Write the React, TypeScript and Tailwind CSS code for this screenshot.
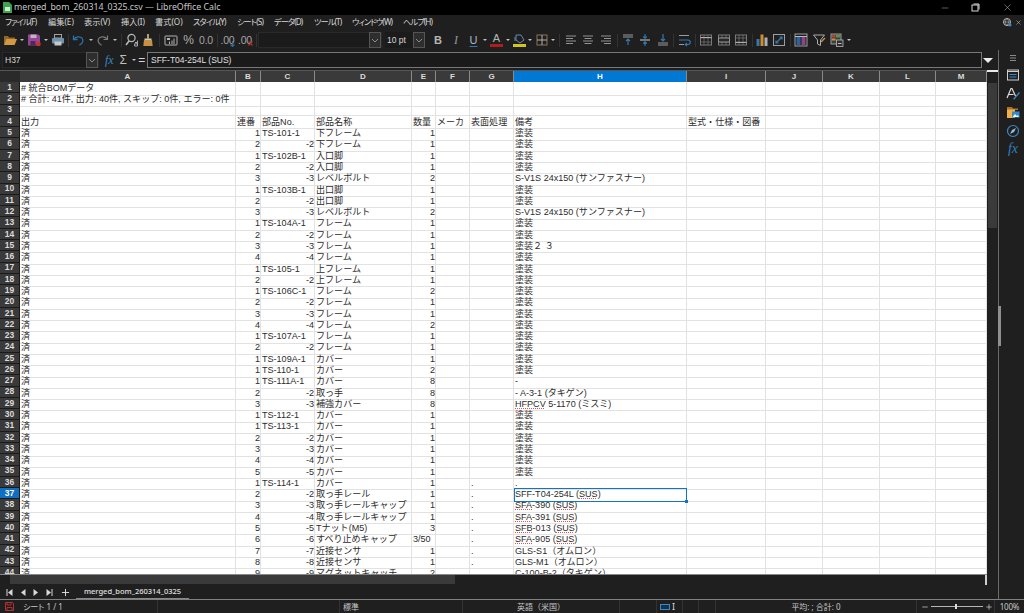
import React from "react";
import { Minus, Plus, X } from "lucide-react";

type R = [string, string, string, string, string, string, string, string, string];
const T = "塗装";
const rows: R[] = [
  ["# 統合BOMデータ", "", "", "", "", "", "", "", ""],
  ["# 合計: 41件, 出力: 40件, スキップ: 0件, エラー: 0件", "", "", "", "", "", "", "", ""],
  ["", "", "", "", "", "", "", "", ""],
  ["出力", "連番", "部品No.", "部品名称", "数量", "メーカ", "表面処理", "備考", "型式・仕様・図番"],
  ["済", "1", "TS-101-1", "下フレーム", "1", "", "", T, ""],
  ["済", "2", "-2", "下フレーム", "1", "", "", T, ""],
  ["済", "1", "TS-102B-1", "入口脚", "1", "", "", T, ""],
  ["済", "2", "-2", "入口脚", "1", "", "", T, ""],
  ["済", "3", "-3", "レベルボルト", "2", "", "", "S-V1S 24x150 (サンファスナー)", ""],
  ["済", "1", "TS-103B-1", "出口脚", "1", "", "", T, ""],
  ["済", "2", "-2", "出口脚", "1", "", "", T, ""],
  ["済", "3", "-3", "レベルボルト", "2", "", "", "S-V1S 24x150 (サンファスナー)", ""],
  ["済", "1", "TS-104A-1", "フレーム", "1", "", "", T, ""],
  ["済", "2", "-2", "フレーム", "1", "", "", T, ""],
  ["済", "3", "-3", "フレーム", "1", "", "", "塗装２ ３", ""],
  ["済", "4", "-4", "フレーム", "1", "", "", T, ""],
  ["済", "1", "TS-105-1", "上フレーム", "1", "", "", T, ""],
  ["済", "2", "-2", "上フレーム", "1", "", "", T, ""],
  ["済", "1", "TS-106C-1", "フレーム", "2", "", "", T, ""],
  ["済", "2", "-2", "フレーム", "1", "", "", T, ""],
  ["済", "3", "-3", "フレーム", "1", "", "", T, ""],
  ["済", "4", "-4", "フレーム", "2", "", "", T, ""],
  ["済", "1", "TS-107A-1", "フレーム", "1", "", "", T, ""],
  ["済", "2", "-2", "フレーム", "1", "", "", T, ""],
  ["済", "1", "TS-109A-1", "カバー", "1", "", "", T, ""],
  ["済", "1", "TS-110-1", "カバー", "2", "", "", T, ""],
  ["済", "1", "TS-111A-1", "カバー", "8", "", "", "-", ""],
  ["済", "2", "-2", "取っ手", "8", "", "", "- A-3-1 (タキゲン)", ""],
  ["済", "3", "-3", "補強カバー", "8", "", "", "HFPCV 5-1170 (ミスミ)", ""],
  ["済", "1", "TS-112-1", "カバー", "1", "", "", T, ""],
  ["済", "1", "TS-113-1", "カバー", "1", "", "", T, ""],
  ["済", "2", "-2", "カバー", "1", "", "", T, ""],
  ["済", "3", "-3", "カバー", "1", "", "", T, ""],
  ["済", "4", "-4", "カバー", "1", "", "", T, ""],
  ["済", "5", "-5", "カバー", "1", "", "", T, ""],
  ["済", "1", "TS-114-1", "カバー", "1", "", ".", ".", ""],
  ["済", "2", "-2", "取っ手レール", "1", "", ".", "SFF-T04-254L (SUS)", ""],
  ["済", "3", "-3", "取っ手レールキャップ", "1", "", ".", "SFA-390 (SUS)", ""],
  ["済", "4", "-4", "取っ手レールキャップ", "1", "", ".", "SFA-391 (SUS)", ""],
  ["済", "5", "-5", "Tナット(M5)", "3", "", ".", "SFB-013 (SUS)", ""],
  ["済", "6", "-6", "すべり止めキャップ", "3/50", "", ".", "SFA-905 (SUS)", ""],
  ["済", "7", "-7", "近接センサ", "1", "", ".", "GLS-S1（オムロン）", ""],
  ["済", "8", "-8", "近接センサ", "1", "", ".", "GLS-M1（オムロン）", ""],
  ["済", "9", "-9", "マグネットキャッチ", "2", "", ".", "C-100-B-2（タキゲン）", ""],
];

const gridCols = "grid grid-cols-[216px_25px_54px_97px_24px_34px_44px_173px_79px_57px_57px_56px_51px]";
const cols = ["A", "B", "C", "D", "E", "F", "G", "H", "I", "J", "K", "L", "M"];
const menus: [string, boolean][] = [
  ["ファイル(F)", true],
  ["編集(E)", false],
  ["表示(V)", false],
  ["挿入(I)", false],
  ["書式(O)", false],
  ["スタイル(Y)", true],
  ["シート(S)", true],
  ["データ(D)", true],
  ["ツール(T)", true],
  ["ウィンドウ(W)", true],
  ["ヘルプ(H)", true],
];

function Spell({ text }: { text: string }) {
  const parts = text.split(/(HFPCV|SFA|SFB|SUS)/);
  return (
    <>
      {parts.map((p, i) =>
        /^(HFPCV|SFA|SFB|SUS)$/.test(p) ? (
          <span key={i} className="underline decoration-dotted decoration-[#e25555] decoration-[1px] underline-offset-[1px]">{p}</span>
        ) : (
          <span key={i}>{p}</span>
        )
      )}
    </>
  );
}

function Cell({ text, right, active, spell }: { text: string; right?: boolean; active?: boolean; spell?: boolean }) {
  return (
    <div className={`relative h-full border-r border-b border-[#e2e2e2] whitespace-nowrap leading-[12.500px] ${right ? "text-right pr-0" : "text-left pl-[1px]"} ${active ? "z-10 outline outline-[1.500px] -outline-offset-1 outline-[#0f75c4]" : ""}`}>
      {spell ? <Spell text={text} /> : text}
      {active && <span className="absolute -right-[2px] -bottom-[2px] h-[3px] w-[3px] bg-[#0f75c4]" />}
    </div>
  );
}

function Row({ n, r }: { n: number; r: R }) {
  const active = n === 37;
  return (
    <div className="flex h-[11.286px]">
      <div className={`flex w-[20px] shrink-0 items-center justify-center border-r border-b border-[#1a1a1a] text-[8.500px] font-semibold leading-none text-[#dcdcdc] ${active ? "bg-[#0f6fc0] text-white" : "bg-[#3a3a3a]"}`}>{n}</div>
      <div className={`${gridCols} h-full`}>
        <Cell text={r[0]} />
        <Cell text={r[1]} right={n > 4} />
        <Cell text={r[2]} right={r[2].startsWith("-")} />
        <Cell text={r[3]} />
        <Cell text={r[4]} right={n > 4 && r[4] !== "3/50"} />
        <Cell text={r[5]} />
        <Cell text={r[6]} />
        <Cell text={r[7]} active={active} spell />
        <Cell text={r[8]} />
        <Cell text="" />
        <Cell text="" />
        <Cell text="" />
        <Cell text="" />
      </div>
    </div>
  );
}

function Dd({ className = "w-[6px]" }: { className?: string }) {
  return (
    <div className={`flex shrink-0 items-center justify-center ${className}`}>
      <span className="h-0 w-0 border-x-[2px] border-t-[2.500px] border-x-transparent border-t-[#c4c4c4]" />
    </div>
  );
}
function Sep({ className = "w-[4px]" }: { className?: string }) {
  return (
    <div className={`flex shrink-0 items-center justify-center ${className}`}>
      <span className="h-[13px] w-px bg-[#333333]" />
    </div>
  );
}
function B({ className = "w-[18px]", children }: { className?: string; children: React.ReactNode }) {
  return <div className={`flex h-full shrink-0 items-center justify-center opacity-85 ${className}`}>{children}</div>;
}
function Svg({ children }: { children: React.ReactNode }) {
  return <svg width="14" height="14" viewBox="0 0 14 14" fill="none" strokeWidth="1">{children}</svg>;
}

const GridIcon = ({ v }: { v: number }) => (
  <Svg>
    <rect x="1.500" y="2" width="11" height="10" stroke="#8a8a8a" />
    <path d="M1.500 5h11M1.500 9h11M5 2v10M9 2v10" stroke="#8a8a8a" strokeWidth="0.7" />
    {v === 0 && <path d="M1.500 4.500h11" stroke="#c8c8c8" />}
    {v === 1 && <path d="M1.500 5h11v4h-11z" fill="#2a2a2a" stroke="#aaa" />}
    {v === 2 && <path d="M1.500 9.500h11" stroke="#c8c8c8" />}
  </Svg>
);
const AlignIcon = ({ a }: { a: number }) => {
  const d = a === 0 ? "M2 3h10M2 5.500h7M2 8h10M2 10.500h7" : a === 1 ? "M2 3h10M3.500 5.500h7M2 8h10M3.500 10.500h7" : "M2 3h10M5 5.500h7M2 8h10M5 10.500h7";
  return <Svg><path d={d} stroke="#a8a8a8" strokeWidth="1.200" /></Svg>;
};
const VAlignIcon = ({ a }: { a: number }) => (
  <Svg>
    {a === 0 && <path d="M2 2h10M2 4h10" stroke="#b0b0b0" />}
    {a === 0 && <path d="M7 12V6M5 8l2-2 2 2" stroke="#3a88c8" strokeWidth="1.200" />}
    {a === 1 && <path d="M2 7h10" stroke="#b0b0b0" strokeWidth="1.400" />}
    {a === 1 && <path d="M7 1v4M5.300 3.500L7 5.300l1.700-1.800M7 13V9M5.300 10.500L7 8.700l1.700 1.800" stroke="#3a88c8" strokeWidth="1.100" />}
    {a === 2 && <path d="M2 10h10M2 12h10" stroke="#b0b0b0" />}
    {a === 2 && <path d="M7 1v7M5 6l2 2 2-2" stroke="#3a88c8" strokeWidth="1.200" />}
  </Svg>
);

function Toolbar() {
  return (
    <div className="flex h-[20px] items-center pl-[1px]">
      <B>
        <Svg>
          <path d="M1 3h4l1 1.500h6V6H3.500L1 12z" fill="#a9742a" />
          <path d="M3.200 6H14l-2.400 6H1z" fill="#efb04a" />
        </Svg>
      </B>
      <Dd />
      <B>
        <Svg>
          <path d="M1 1.500h10.500L13 3v9.500H1z" fill="#a94fa9" />
          <rect x="3.500" y="1.500" width="6" height="3.500" fill="#e6c8e6" />
          <rect x="3.500" y="8" width="5" height="4.500" fill="#5d2a5d" />
          <circle cx="11.500" cy="11" r="2.300" fill="#e0392b" />
        </Svg>
      </B>
      <Dd />
      <B>
        <Svg>
          <rect x="3.500" y="1.500" width="7" height="3.500" stroke="#b8b8b8" />
          <rect x="1" y="5" width="12" height="5.500" rx="1" fill="#7fa7c4" />
          <rect x="3.500" y="8.500" width="7" height="4" fill="#e5e5e5" />
        </Svg>
      </B>
      <Sep className="w-[2px]" />
      <B>
        <Svg>
          <path d="M2.500 2.500v4h4" stroke="#2f7fc0" strokeWidth="1.300" />
          <path d="M2.700 6.300C4.800 3.400 9 3 11 5.200c1.900 2.400.6 5.600-2.600 7" stroke="#2f7fc0" strokeWidth="1.300" />
        </Svg>
      </B>
      <Dd className="w-[8px]" />
      <B className="w-[16px]">
        <Svg>
          <path d="M11.500 2.500v4h-4" stroke="#8a8a8a" strokeWidth="1.200" />
          <path d="M11.300 6.300C9.200 3.400 5 3 3 5.200c-1.900 2.400-.6 5.600 2.600 7" stroke="#8a8a8a" strokeWidth="1.200" />
        </Svg>
      </B>
      <Dd className="w-[8px]" />
      <Sep />
      <B className="w-[17px]">
        <Svg>
          <circle cx="6.500" cy="5" r="3.600" stroke="#d5d5d5" strokeWidth="1.200" />
          <path d="M4 8L1 12" stroke="#d5d5d5" strokeWidth="1.600" />
          <path d="M10 9.500h2.500V13H9.600v-2.200h2.600M12.500 7.500v2" stroke="#d5d5d5" strokeWidth="0.900" />
        </Svg>
      </B>
      <B className="w-[16px]">
        <Svg>
          <rect x="6" y="1" width="2" height="4.500" fill="#d9b26a" />
          <rect x="3.500" y="5.500" width="7" height="1.500" fill="#e8e8e8" />
          <path d="M3 7h8l.7 6H2.300z" fill="#e4a748" />
        </Svg>
      </B>
      <Sep className="w-[6px]" />
      <B>
        <Svg>
          <rect x="1" y="3" width="12" height="9" rx="0.500" stroke="#cfcfcf" />
          <rect x="3" y="5" width="3" height="2" fill="#cfcfcf" />
          <path d="M7.500 11V7.500h1V11zM9.500 11V5.500h1V11zM5 11V8.500h1V11z" fill="#cfcfcf" />
        </Svg>
      </B>
      <B className="w-[17px]"><span className="text-[12px] leading-none text-[#c8c8c8] font-['Liberation_Sans']">%</span></B>
      <B><span className="text-[10.500px] leading-none text-[#bdbdbd] tracking-tight font-['Liberation_Sans']">0.0</span></B>
      <Sep />
      <B>
        <div className="flex items-end">
          <span className="text-[10.500px] leading-none tracking-tight text-[#bdbdbd] font-['Liberation_Sans']">.00</span>
          <svg width="5" height="6" viewBox="0 0 5 6" fill="none" className="-ml-[4px] -mb-[2px]"><path d="M2.500 0v5M.5 3.500l2 2 2-2" stroke="#2f7fc0" strokeWidth="1.100" /></svg>
        </div>
      </B>
      <B className="w-[17px]">
        <div className="flex items-end">
          <span className="text-[10.500px] leading-none tracking-tight text-[#bdbdbd] font-['Liberation_Sans']">.00</span>
          <svg width="5" height="5" viewBox="0 0 5 5" fill="none" className="-ml-[4px] -mb-[1px]"><path d="M.5.5l4 4M4.500.5l-4 4" stroke="#c8392b" strokeWidth="1.100" /></svg>
        </div>
      </B>
      <Sep className="w-[4px]" />
      <div className="flex h-[16px] w-[124px] shrink-0 items-center justify-end bg-[#1b1b1b] border border-[#2a2a2a]">
        <Chevron />
      </div>
      <div className="ml-[3px] flex h-[16px] w-[40px] shrink-0 items-center justify-between bg-[#1b1b1b] pl-[2px] text-[8.500px] text-[#d8d8d8]">
        <span>10 pt</span>
        <Chevron />
      </div>
      <B className="ml-[4px] w-[18px]"><span className="font-['Liberation_Sans'] text-[11px] font-bold leading-none text-[#d0d0d0]">B</span></B>
      <B><span className="font-['Liberation_Serif'] text-[12px] italic leading-none text-[#aaaaaa]">I</span></B>
      <B className="w-[17px]"><span className="font-['Liberation_Sans'] text-[11px] leading-none text-[#bfd2e2] underline decoration-[#3a88c8] underline-offset-2">U</span></B>
      <Dd className="w-[6px]" />
      <B className="w-[17px]">
        <div className="flex flex-col items-center"><span className="font-['Liberation_Sans'] text-[11px] leading-[11px] text-[#cfcfcf]">A</span><span className="h-[3px] w-[13px] bg-[#c81e1e]" /></div>
      </B>
      <Dd className="w-[6px]" />
      <B className="w-[16px]">
        <div className="flex flex-col items-center">
          <svg width="12" height="10" viewBox="0 0 12 10" fill="none"><path d="M3 1h5l3 5-4 3-4-3zM2 3v4" stroke="#6fa0c4" /></svg>
          <span className="h-[3px] w-[13px] bg-[#efe41e]" />
        </div>
      </B>
      <Dd className="w-[6px]" />
      <B className="w-[17px]">
        <Svg>
          <rect x="2" y="2" width="10" height="10" stroke="#a9825a" />
          <path d="M7 2v10M2 7h10" stroke="#c8c8c8" />
        </Svg>
      </B>
      <Dd className="w-[6px]" />
      <Sep className="w-[6px]" />
      <B className="w-[17px]"><AlignIcon a={0} /></B>
      <B className="w-[18px]"><AlignIcon a={1} /></B>
      <B className="w-[18px]"><AlignIcon a={2} /></B>
      <Sep />
      <B className="w-[17px]"><VAlignIcon a={0} /></B>
      <B className="w-[18px]"><VAlignIcon a={1} /></B>
      <B className="w-[17px]"><VAlignIcon a={2} /></B>
      <Sep />
      <B className="w-[18px]">
        <Svg>
          <path d="M2 2.500h10M2 11.500h5" stroke="#b0b0b0" strokeWidth="1.200" />
          <path d="M2 7h9a1.800 1.800 0 010 4.500H8.500M10 10l-1.800 1.500L10 13" stroke="#3a88c8" strokeWidth="1.100" />
        </Svg>
      </B>
      <Sep className="w-[4px]" />
      <B className="w-[18px]"><GridIcon v={0} /></B>
      <B className="w-[17px]"><GridIcon v={1} /></B>
      <B className="w-[18px]"><GridIcon v={2} /></B>
      <Sep />
      <B className="w-[16px]">
        <Svg>
          <rect x="1.500" y="6" width="3" height="7" fill="#3a88c8" />
          <rect x="5.500" y="1.500" width="3" height="11.500" fill="#f0a030" />
          <rect x="9.500" y="4.500" width="3" height="8.500" fill="#c9c9c9" />
        </Svg>
      </B>
      <B className="w-[18px]">
        <Svg>
          <rect x="1.500" y="1.500" width="11" height="11" stroke="#b5b5b5" fill="#222" />
          <path d="M4 10l6-6M7.500 4H10v2.500M4 7.500V10h2.500" stroke="#3a88c8" strokeWidth="1.200" />
        </Svg>
      </B>
      <Sep className="w-[4px]" />
      <B className="w-[18px]">
        <Svg>
          <rect x="1" y="1" width="12" height="12" stroke="#b5b5b5" />
          <rect x="2.500" y="4" width="4" height="8" fill="#2f6fb0" />
          <rect x="7.500" y="4" width="4" height="8" fill="#a04aa0" />
          <path d="M1 3.500h12" stroke="#d5d5d5" />
        </Svg>
      </B>
      <B className="w-[18px]">
        <Svg>
          <path d="M1.500 2h11L8.500 7v5.500L5.500 11V7z" stroke="#c5c5c5" />
          <path d="M9 8l3.500-3.500 1 1L10 9l-1.500.5z" fill="#e4a748" />
        </Svg>
      </B>
      <B className="w-[18px]">
        <Svg>
          <rect x="1" y="1" width="10" height="10" fill="#444" stroke="#b5b5b5" />
          <rect x="2" y="2" width="3.500" height="2.500" fill="#d04a35" />
          <rect x="6" y="2" width="4" height="2.500" fill="#6aa84f" />
          <rect x="2" y="5.500" width="3.500" height="2" fill="#e4a748" />
          <rect x="6.500" y="7" width="6.500" height="6.500" fill="#333" stroke="#d5d5d5" strokeWidth="0.800" />
          <path d="M8 10.500h3.500" stroke="#d5d5d5" />
        </Svg>
      </B>
      <Dd className="w-[5px]" />
    </div>
  );
}

function Chevron() {
  return (
    <div className="flex h-[16px] w-[12px] items-center justify-center border border-[#555] bg-[#2e2e2e]">
      <svg width="8" height="5" viewBox="0 0 8 5" fill="none"><path d="M1 1l3 3 3-3" stroke="#8e8e8e" /></svg>
    </div>
  );
}

function FormulaBar() {
  return (
    <div className="flex h-[20px] items-start pt-[2px] pl-[2px] pr-[4px]">
      <div className="flex h-[16px] w-[97px] shrink-0 items-center justify-between border border-[#2a2a2a] bg-[#1a1a1a] pl-[2px] text-[8.500px] text-[#d8d8d8]">
        <span>H37</span>
        <Chevron />
      </div>
      <div className="flex h-[16px] w-[48px] shrink-0 items-center pl-[6px]">
        <span className="w-[15px] font-['Liberation_Serif'] text-[12px] italic leading-none text-[#3a88c8]">fx</span>
        <span className="w-[11px] font-['Liberation_Sans'] text-[12px] leading-none text-[#bdbdbd]">Σ</span>
        <Dd className="w-[7px]" />
        <span className="w-[10px] pl-[1px] font-['Liberation_Sans'] text-[12px] leading-none text-[#d5d5d5]">=</span>
      </div>
      <div className="flex h-[16px] flex-1 items-center border border-[#777] bg-[#1a1a1a] pl-[3px] text-[8.500px] text-[#e0e0e0]">SFF-T04-254L (SUS)</div>
      <div className="flex h-[16px] w-[12px] shrink-0 items-center justify-center">
        <span className="h-0 w-0 border-x-[5px] border-t-[5px] border-x-transparent border-t-[#eeeeee]" />
      </div>
    </div>
  );
}

function Side() {
  return (
    <div className="relative flex w-[26px] shrink-0 flex-col items-center border-l border-[#6a6a6a] pl-[3px] pt-[4px]">
      <span className="absolute -left-[1px] top-[256px] h-[40px] w-[3px] bg-[#8f8f8f]" />
      <svg width="8" height="8" viewBox="0 0 8 8" className="mb-[6px]"><path d="M1 1.500h6M1 4h6M1 6.500h6" stroke="#8a8a8a" /></svg>
      <div className="flex flex-col items-center gap-[4.500px]">
        <svg width="14" height="14" viewBox="0 0 14 14" fill="none">
          <rect x="1.500" y="2" width="11" height="10" stroke="#cfcfcf" />
          <path d="M1.500 3.500h11" stroke="#cfcfcf" />
          <path d="M3.500 6.500h7M3.500 9h7" stroke="#3a88c8" />
        </svg>
        <svg width="14" height="14" viewBox="0 0 14 14" fill="none">
          <path d="M1 11L5 1.500h1L9.500 9M2.500 7.500h5" stroke="#dcdcdc" strokeWidth="1.200" />
          <path d="M7.500 12c1.500-.3 1.500-2 3-3l3-3.500" stroke="#3a88c8" strokeWidth="1.300" />
        </svg>
        <svg width="14" height="14" viewBox="0 0 14 14">
          <path d="M1 2h5l1 1.500h5V5H1z" fill="#a9742a" />
          <path d="M1 4.500h8V13H1z" fill="#efb04a" />
          <rect x="6" y="6.500" width="7.500" height="6" fill="#3a88c8" />
          <path d="M6.500 12l2.500-3 2 2 1-1 1 2z" fill="#dff" />
        </svg>
        <svg width="14" height="14" viewBox="0 0 14 14" fill="none">
          <circle cx="7" cy="7" r="5.500" stroke="#3a88c8" strokeWidth="1.200" />
          <path d="M10 4L8 8 4 10l2-4z" fill="#9abdd8" />
        </svg>
        <span className="font-['Liberation_Serif'] text-[14px] italic leading-[14px] text-[#2f7fc0]">fx</span>
      </div>
    </div>
  );
}

function StatusCell({ className, children }: { className: string; children?: React.ReactNode }) {
  return <div className={`flex h-full shrink-0 items-center border-r border-[#333] ${className}`}>{children}</div>;
}

function NavTri({ left, bar }: { left?: boolean; bar?: boolean }) {
  return (
    <svg width="8" height="9" viewBox="0 0 8 9" fill="#d8d8d8">
      {left ? <path d="M6.500 1v7L2 4.500z" /> : <path d="M1.500 1v7L6 4.500z" />}
      {bar && (left ? <rect x="0.500" y="1" width="1" height="7" /> : <rect x="6.500" y="1" width="1" height="7" />)}
    </svg>
  );
}

export default function App() {
  return (
    <div className="flex h-[613px] w-[1024px] flex-col overflow-hidden bg-[#1f1f1f] font-['Liberation_Sans','Noto_Sans_CJK_JP',sans-serif] text-[9.050px] text-[#2c2c2c]">
      <div className="flex h-[15px] shrink-0 items-center justify-between bg-black pl-[3px] font-['Noto_Sans','Noto_Sans_CJK_JP',sans-serif] text-[8.800px] text-[#c8c8c8]">
        <div className="flex items-center gap-[2px]">
          <svg width="9" height="11" viewBox="0 0 9 11"><path d="M0 0h6l3 3v8H0z" fill="#3ea34f" /><path d="M2 5h5v4H2z" fill="#cfeccf" /></svg>
          <span>merged_bom_260314_0325.csv — LibreOffice Calc</span>
        </div>
        <div className="flex items-center text-[#d8d8d8]">
          <span className="flex w-[30px] justify-center"><Minus size={10} strokeWidth={1} /></span>
          <span className="flex w-[30px] justify-center">
            <svg width="9" height="9" viewBox="0 0 9 9" fill="none"><rect x="1" y="2" width="6" height="6" stroke="#d8d8d8" /><path d="M2.500 1H8v5.500" stroke="#d8d8d8" /></svg>
          </span>
          <span className="flex w-[34px] justify-center"><X size={11} strokeWidth={1} /></span>
        </div>
      </div>

      <div className="flex h-[15px] shrink-0 items-center justify-between pl-[5px] pr-[2px] font-['Noto_Sans','Noto_Sans_CJK_JP',sans-serif] text-[8.200px] text-[#d6d6d6] [font-feature-settings:'palt']">
        <div className="grid grid-cols-[43px_36px_37px_34px_38px_44px_37px_40px_38px_51px_40px]">
          {menus.map(([m, kana]) => <span key={m} className={`whitespace-nowrap ${kana ? "tracking-[-0.9px]" : ""}`}>{m}</span>)}
        </div>
        <div className="flex items-center gap-[3px]">
          <svg width="9" height="9" viewBox="0 0 9 9" fill="none"><circle cx="4" cy="4" r="3.500" stroke="#bbb" /><path d="M.5 4h7M4 .5c-2 2-2 5 0 7M4 .5c2 2 2 5 0 7" stroke="#bbb" strokeWidth="0.600" /><circle cx="7" cy="7" r="1.500" fill="#3a88c8" /></svg>
          <X size={7} className="text-[#bbb]" />
        </div>
      </div>

      <Toolbar />

      <div className="flex min-h-0 flex-1">
        <div className="flex min-w-0 flex-1 flex-col">
          <FormulaBar />
          <div className="flex min-h-0 flex-1">
            <div className="min-w-0 flex-1 overflow-hidden border-b border-[#888]">
              <div className="flex h-[12px] border-t border-[#555]">
                <div className="w-[20px] shrink-0 bg-[#2a2a2a]" />
                <div className={`${gridCols} h-full`}>
                  {cols.map((c) => (
                    <div key={c} className={`flex items-center justify-center border-r border-[#8a8a8a] text-[8px] font-semibold leading-none ${c === "H" ? "bg-[#0078d4] text-white" : "bg-[#3a3a3a] text-[#dcdcdc]"}`}>{c}</div>
                  ))}
                </div>
              </div>
              <div className="h-[493px] overflow-hidden bg-white">
                {rows.map((r, i) => <Row key={i} n={i + 1} r={r} />)}
              </div>
            </div>
            <div className="flex w-[11px] shrink-0 flex-col">
              <div className="h-[2px] bg-[#e8e8e8]" />
              <div className="h-[11px] bg-[#1f1f1f]" />
              <div className="mx-[1px] h-[145px] bg-[#3a3a3a]" />
            </div>
          </div>
          <div className="flex h-[10px] shrink-0">
            <div className="ml-[10px] h-[9px] w-[445px] bg-[#3a3a3a]" />
            <div className="flex-1" />
            <div className="mr-[11px] h-[10px] w-[2px] bg-[#cfcfcf]" />
          </div>
          <div className="flex h-[14px] shrink-0 items-center pl-[4px]">
            <div className="flex w-[11px] justify-center"><NavTri left bar /></div>
            <div className="ml-[2px] flex w-[12px] justify-center"><NavTri left /></div>
            <div className="ml-[1px] flex w-[12px] justify-center"><NavTri /></div>
            <div className="ml-[1px] flex w-[12px] justify-center"><NavTri bar /></div>
            <div className="ml-[4px] flex w-[12px] justify-center"><Plus size={11} strokeWidth={2} className="text-[#e5e5e5]" /></div>
            <div className="ml-[5px] flex h-[14px] w-[113px] items-center justify-center border-b border-[#8a8a8a] font-['Noto_Sans','Noto_Sans_CJK_JP',sans-serif] text-[7.500px] font-medium text-[#e0e0e0]">merged_bom_260314_0325</div>
          </div>
        </div>
        <Side />
      </div>

      <div className="flex h-[14px] shrink-0 items-center border-t border-[#808080] font-['Noto_Sans','Noto_Sans_CJK_JP',sans-serif] text-[8px] text-[#c8c8c8]">
        <StatusCell className="w-[158px] pl-[5px]">
          <svg width="9" height="9" viewBox="0 0 9 9" fill="none" className="mr-[9px]"><path d="M.5.5h7l1 1v7h-8z" stroke="#b03030" /><path d="M2 .5V3h4V.5M2 8.500V5.500h5v3" stroke="#b03030" /></svg>
          <span className="[font-feature-settings:'palt']">シート 1 / 1</span>
        </StatusCell>
        <StatusCell className="w-[182px]" />
        <StatusCell className="w-[123px] pl-[3px]">標準</StatusCell>
        <StatusCell className="w-[157px] justify-center">英語（米国）</StatusCell>
        <StatusCell className="w-[37px]" />
        <StatusCell className="w-[26px] gap-[2px] pl-[3px]">
          <span className="h-[6px] w-[10px] border border-[#3a88c8] bg-[#16324a]" />
          <span className="text-[9px] leading-none text-[#ddd]">I</span>
        </StatusCell>
        <StatusCell className="w-[16px]" />
        <StatusCell className="w-[17px]" />
        <StatusCell className="w-[201px] justify-center">平均: ; 合計: 0</StatusCell>
        <StatusCell className="w-[78px] pl-[4px]">
          <Minus size={8} strokeWidth={2} className="text-[#ddd]" />
          <div className="relative mx-[2px] h-px w-[52px] bg-[#b5b5b5]">
            <span className="absolute left-[24px] -top-[2px] h-[5px] w-[2px] bg-[#ddd]" />
          </div>
          <Plus size={8} strokeWidth={2} className="text-[#ddd]" />
        </StatusCell>
        <div className="flex flex-1 items-center justify-center tracking-tight">100%</div>
      </div>
    </div>
  );
}
